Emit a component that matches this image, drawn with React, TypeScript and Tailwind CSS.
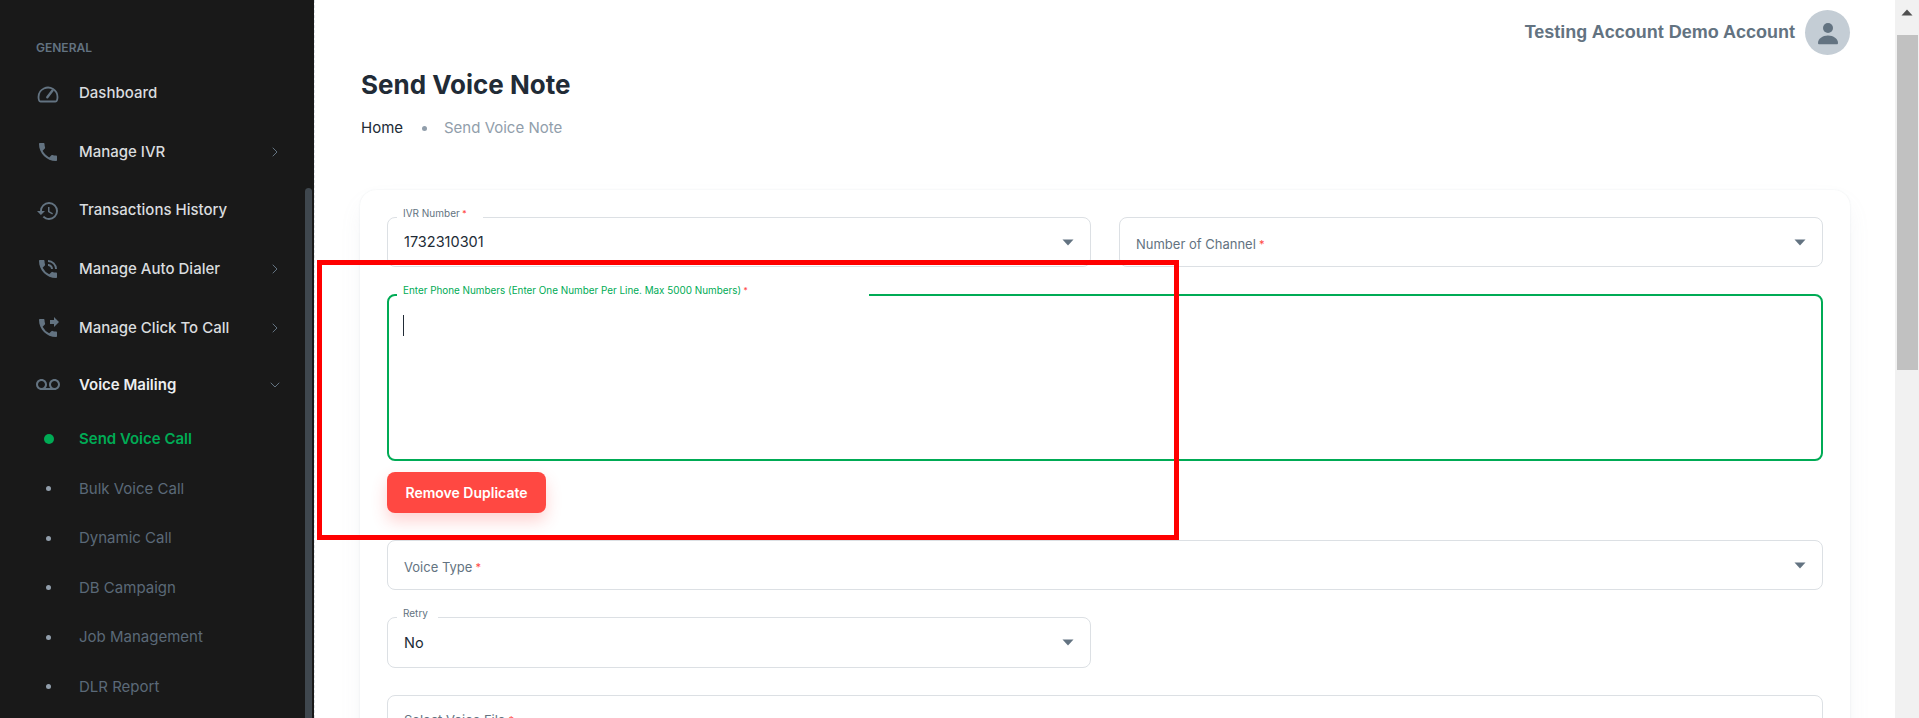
import React, { FC, ReactNode } from "react";
import { ChevronDown, ChevronRight } from "lucide-react";
import {
  MdHistory,
  MdOutlineVoicemail,
  MdPhone,
  MdPhoneForwarded,
  MdPhoneInTalk,
} from "react-icons/md";

const GaugeIcon: FC = () => (
  <svg width="24" height="24" viewBox="0 0 24 24" fill="none" stroke="currentColor" strokeWidth="1.8">
    <path d="M4.6 20.5h14.8c.7 0 1.3-.4 1.5-1 .4-1 .6-2.2.6-3.4a9.5 9.5 0 0 0-13.6-8.6A9.5 9.5 0 0 0 2.5 16c0 1.200.2 2.400.6 3.500.2.600.8 1 1.500 1z" />
    <path d="M11.300 16.300 16.500 9.500" strokeWidth="2.400" strokeLinecap="round" />
  </svg>
);

const TopItem: FC<{ icon: ReactNode; label: string; arrow?: boolean }> = ({ icon, label, arrow }) => (
  <div className="flex h-[58.7px] items-center pl-[36px] pr-[22px]">
    <span className="flex w-[24px] justify-center text-[#637381]">{icon}</span>
    <span className="ml-[19px] flex-1 text-[15px] font-medium text-[#d9dcdf]">{label}</span>
    {arrow && <ChevronRight size={16} strokeWidth={1.5} className="text-[#637381]" />}
  </div>
);

const SubItem: FC<{ label: string }> = ({ label }) => (
  <div className="flex h-[49.500px] items-center pl-[36px]">
    <span className="flex w-[25px] justify-center">
      <span className="h-[5px] w-[5px] rounded-full bg-[#919eab]" />
    </span>
    <span className="ml-[18px] text-[15px] text-[#5b6978]">{label}</span>
  </div>
);

const Sidebar: FC = () => (
  <aside className="flex h-full w-[315px] shrink-0 border-r border-dashed border-[#dfe3e8] bg-[#191919] bg-clip-padding">
    <nav className="flex-1 pt-[40px]">
      <div className="pl-[36px] text-[12px] leading-[16px] font-semibold text-[#637381]">GENERAL</div>
      <div className="mt-[8px]">
        <TopItem icon={<GaugeIcon />} label="Dashboard" />
        <TopItem icon={<MdPhone size={24} />} label="Manage IVR" arrow />
        <TopItem icon={<MdHistory size={24} />} label="Transactions History" />
        <TopItem icon={<MdPhoneInTalk size={24} />} label="Manage Auto Dialer" arrow />
        <TopItem icon={<MdPhoneForwarded size={24} />} label="Manage Click To Call" arrow />
        <div className="-mt-[2px] flex h-[58.700px] items-center pl-[36px] pr-[22px]">
          <span className="flex w-[24px] justify-center text-[#637381]">
            <MdOutlineVoicemail size={26} />
          </span>
          <span className="ml-[19px] flex-1 text-[15px] font-semibold text-[#eceef0]">Voice Mailing</span>
          <ChevronDown size={16} strokeWidth={1.5} className="text-[#637381]" />
        </div>
        <div className="flex h-[50px] items-center pl-[36px]">
          <span className="flex w-[25px] justify-center">
            <span className="h-[10px] w-[10px] rounded-full bg-[#00ab55]" />
          </span>
          <span className="ml-[18px] text-[15px] font-semibold text-[#00ab55]">Send Voice Call</span>
        </div>
        <SubItem label="Bulk Voice Call" />
        <SubItem label="Dynamic Call" />
        <SubItem label="DB Campaign" />
        <SubItem label="Job Management" />
        <SubItem label="DLR Report" />
      </div>
    </nav>
    <div className="w-[9px] pt-[188px]">
      <div className="h-full w-[7px] rounded-t-[4px] bg-[#3f474e]" />
    </div>
  </aside>
);

const Arrow: FC = () => (
  <svg width="12" height="7" viewBox="0 0 12 7" className="shrink-0">
    <path d="M0.500 0.500h11L6 6.500z" fill="#637381" />
  </svg>
);

const Star: FC = () => <span className="text-[0.85em] text-[#ff4842]"> *</span>;

interface SelectFieldProps {
  label: string;
  value?: string;
  required?: boolean;
  notch?: string;
  h?: string;
  valuePad?: string;
  labelPad?: string;
}

const SelectField: FC<SelectFieldProps> = ({ label, value, required, notch, h, valuePad, labelPad }) => (
  <div className={`relative flex items-center justify-between rounded-[8px] border border-[#dce0e4] pl-[16px] pr-[16px] ${h ?? "h-[50px]"}`}>
    {value ? (
      <>
        <span className={`absolute -top-[12px] left-[9px] bg-white pl-[6px] text-[10px] leading-[14px] text-[#637381] ${notch ?? ""}`}>
          {label}
          {required && <Star />}
        </span>
        <span className={`text-[14.500px] text-[#212b36] ${valuePad ?? ""}`}>{value}</span>
      </>
    ) : (
      <span className={`text-[13px] text-[#637381] ${labelPad ?? "pt-[5px]"}`}>
        {label}
        {required && <Star />}
      </span>
    )}
    <Arrow />
  </div>
);

const Content: FC = () => (
  <main className="h-full flex-1 overflow-hidden px-[45px]">
    <header className="flex h-[55px] items-end justify-end gap-[10px]">
      <span className="pb-[9px] text-[18px] font-bold text-[#637381]" style={{ fontFamily: '"Liberation Sans", sans-serif' }}>
        Testing Account Demo Account
      </span>
      <span className="flex h-[45px] w-[45px] items-center justify-center rounded-full bg-[#c4cdd5]">
        <svg width="30" height="30" viewBox="0 0 24 24" fill="#637381">
          <circle cx="12" cy="8" r="4" />
          <path d="M4 20c0-3.300 3.600-6 8-6s8 2.700 8 6c0 .600-.400 1-1 1H5c-.600 0-1-.400-1-1z" />
        </svg>
      </span>
    </header>
    <h1 className="mt-[12px] ml-px text-[26px] leading-[36px] font-bold text-[#212b36]">Send Voice Note</h1>
    <div className="mt-[13px] ml-px flex h-[24px] items-center text-[15px] leading-[24px]">
      <span className="w-[42px] text-[#212b36]">Home</span>
      <span className="ml-[19px] h-[5px] w-[5px] rounded-full bg-[#919eab]" />
      <span className="ml-[17px] text-[#919eab]">Send Voice Note</span>
    </div>
    <section className="mt-[50px] rounded-[16px] p-[27px] pb-[60px] shadow-[0_0_2px_0_rgba(145,158,171,0.2),0_12px_24px_-4px_rgba(145,158,171,0.12)]">
      <div className="grid grid-cols-2 gap-x-[28px]">
        <SelectField label="IVR Number" value="1732310301" required notch="pr-[17px]" />
        <SelectField label="Number of Channel" required />
      </div>
      <div className="relative mt-[27px] h-[167px] rounded-[8px] border-2 border-[#00ab55] px-[14px] pt-[19px]">
        <span className="absolute -top-[13px] left-[8px] w-[472px] bg-white pl-[6px] text-[9.900px] leading-[14px] text-[#00ab55]">
          Enter Phone Numbers (Enter One Number Per Line. Max 5000 Numbers)
          <Star />
        </span>
        <span className="block h-[21px] w-px bg-[#212b36]" />
      </div>
      <button className="mt-[11px] h-[41px] w-[159px] rounded-[8px] bg-[#ff4842] text-[14px] font-semibold text-white shadow-[0_8px_16px_0_rgba(255,72,66,0.24)]">
        Remove Duplicate
      </button>
      <div className="mt-[27px]">
        <SelectField label="Voice Type" required />
      </div>
      <div className="mt-[27px] grid grid-cols-2 gap-x-[28px]">
        <SelectField label="Retry" value="No" notch="pr-[10px]" h="h-[51px]" valuePad="pt-[1px]" />
      </div>
      <div className="mt-[27px]">
        <SelectField label="Select Voice File" required h="h-[64px]" labelPad="pb-[13px]" />
      </div>
    </section>
  </main>
);

const PageScrollbar: FC = () => (
  <div className="flex h-full w-[24px] shrink-0 flex-col bg-[#f1f1f1]">
    <div className="flex h-[35px] items-start justify-center pt-[9px]">
      <svg width="12" height="7" viewBox="0 0 12 7">
        <path d="M6 0.500 11.500 6.500h-11z" fill="#505050" />
      </svg>
    </div>
    <div className="ml-[2px] h-[335px] w-[21px] bg-[#c1c1c1]" />
  </div>
);

const App: FC = () => (
  <div className="relative flex h-[718px] w-full overflow-hidden bg-white" style={{ fontFamily: 'Inter, "Noto Sans", sans-serif' }}>
    <Sidebar />
    <Content />
    <PageScrollbar />
    {/* annotation drawn on top of the screenshot */}
    <div className="absolute left-[317px] top-[260px] h-[280px] w-[862px] border-[5px] border-[#ff0000]" />
  </div>
);

export default App;
